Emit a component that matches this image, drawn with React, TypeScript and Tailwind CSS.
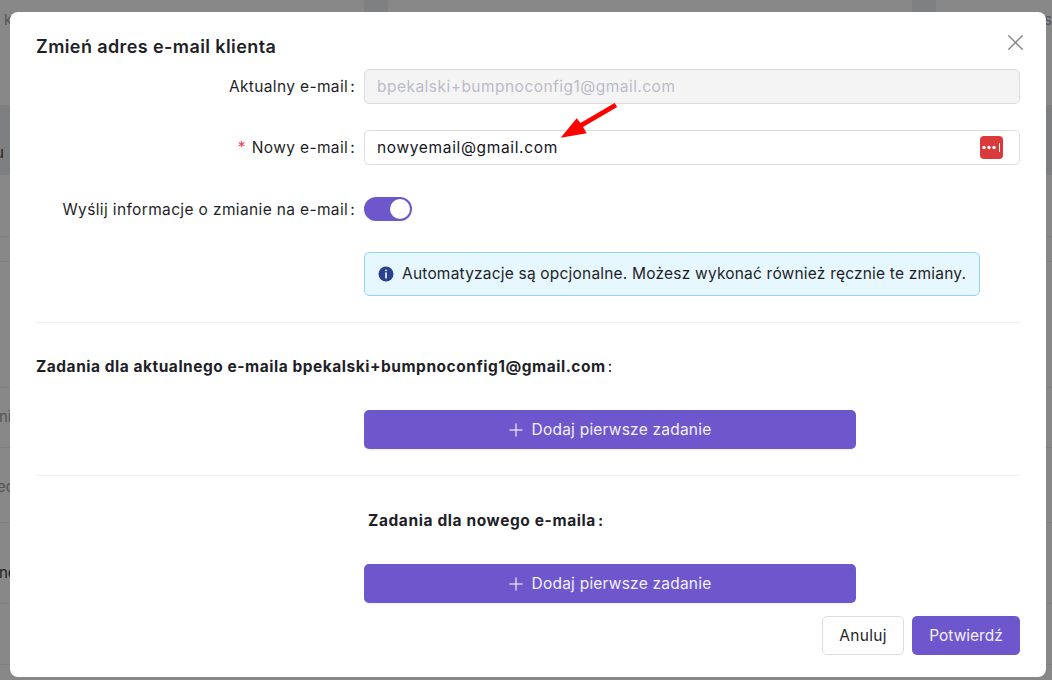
import { X } from "lucide-react";

const BG_ROWS = [
  { h: "h-[62px]", text: "", cls: "" },
  { h: "h-[25px]", text: "", cls: "" },
  { h: "h-[126px]", text: "", cls: "" },
  { h: "h-[60px]", text: "nic", cls: "-ml-[1px] text-[#555]" },
  { h: "h-[75px]", text: "ec", cls: "-ml-[3px] text-[#555] pt-[4px]" },
  { h: "h-[81px]", text: "nc", cls: "-ml-[1px] text-[#222] pt-[20px]" },
  { h: "h-[61px]", text: "", cls: "" },
];

function Backdrop() {
  return (
    <div className="flex flex-col text-[15px]">
      <div className="h-[105px] flex">
        <div className="w-[364px] pt-[9px] pl-[4px] text-[#555]">k</div>
        <div className="w-[24px] h-[12px] bg-[#7f8081]" />
        <div className="w-[524px]" />
        <div className="w-[24px] h-[12px] bg-[#7f8081]" />
        <div className="w-[116px] pt-[9px] pl-[108px] text-[#555]">s</div>
      </div>
      <div className="h-[70px] bg-[#7d7f80] flex items-center text-[#222] pt-[26px]">
        <span className="-ml-[5px]">u</span>
      </div>
      {BG_ROWS.map((row, i) => (
        <div key={i} className={`${row.h} border-b border-[#7f7f7f] flex items-center`}>
          <span className={row.cls}>{row.text}</span>
        </div>
      ))}
    </div>
  );
}

function Label({ children, required }: { children: string; required?: boolean }) {
  return (
    <div className="w-[319px] shrink-0 text-right text-[15.5px] tracking-[0.36px] text-[#1f1f28] mr-[9px] pt-[1px]">
      {required && <span className="text-[#f5405c] mr-[6px]">*</span>}
      {children}
      <span className="ml-[2px]">:</span>
    </div>
  );
}

function AddButton() {
  return (
    <button className="ml-[328px] w-[492px] h-[39px] rounded-[5px] bg-[#6e57cd] text-[#f3f0fc] text-[15.5px] tracking-[0.22px] flex items-center justify-center gap-[9px] pt-[1px] shadow-[0_2px_0_rgba(110,87,205,0.06)]">
      <svg width="14" height="14" viewBox="0 0 14 14" stroke="currentColor" strokeWidth="1.2">
        <line x1="0.5" y1="7" x2="13.5" y2="7" />
        <line x1="7" y1="0.5" x2="7" y2="13.5" />
      </svg>
      Dodaj pierwsze zadanie
    </button>
  );
}

export default function App() {
  return (
    <div className="relative w-[1052px] h-[680px] overflow-hidden bg-[#888888] font-['Inter','Liberation_Sans',sans-serif]">
      <Backdrop />

      {/* Modal */}
      <div className="absolute left-[10px] top-[12px] w-[1036px] h-[665px] bg-white rounded-[8px] pt-[23px] pl-[26px] pr-[26px]">
        <button className="absolute top-[17px] right-[17px] text-[#808080]">
          <X size={27} strokeWidth={1.1} />
        </button>

        <h2 className="h-[24px] leading-[24px] text-[18px] font-semibold text-[#1f1f28] tracking-[0.4px]">
          Zmień adres e-mail klienta
        </h2>

        <div className="mt-[10px] flex items-center h-[35px]">
          <Label>Aktualny e-mail</Label>
          <div className="flex-1 h-[35px] flex items-center px-[12px] pt-[1px] rounded-[5px] border border-[#dcdcdc] bg-[#f4f4f4] text-[15.5px] tracking-[0.47px] text-[#bcbcc8]">
            bpekalski+bumpnoconfig1@gmail.com
          </div>
        </div>

        <div className="mt-[26px] flex items-center h-[35px]">
          <Label required>Nowy e-mail</Label>
          <div className="flex-1 h-[35px] flex items-center justify-between pl-[12px] pr-[16px] rounded-[5px] border border-[#dcdcdc] bg-white text-[15.5px] tracking-[0.65px] text-[#14141c]">
            <span className="pt-[1px]">nowyemail@gmail.com</span>
            <svg width="23" height="23" viewBox="0 0 23 23">
              <rect width="23" height="23" rx="4" fill="#db3a3a" />
              <circle cx="4" cy="11.5" r="1.7" fill="#fff" />
              <circle cx="9" cy="11.5" r="1.7" fill="#fff" />
              <circle cx="14" cy="11.5" r="1.7" fill="#fff" />
              <rect x="19" y="7" width="1" height="9" fill="#fff" />
            </svg>
          </div>
        </div>

        <div className="mt-[32px] flex items-center h-[24px]">
          <Label>Wyślij informacje o zmianie na e-mail</Label>
          <div className="w-[48px] h-[24px] rounded-full bg-[#6e57cd] flex items-center justify-end pr-[2px]">
            <div className="w-[20px] h-[20px] rounded-full bg-white" />
          </div>
        </div>

        <div className="mt-[31px] ml-[328px] w-[616px] h-[44px] rounded-[5px] border border-[#91d5ff] bg-[#e6f7ff] flex items-center pl-[13px] gap-[8px] text-[15.5px] tracking-[0.2px] text-[#1f1f28]">
          <svg width="16" height="16" viewBox="0 0 16 16" className="shrink-0">
            <circle cx="8" cy="8" r="7.5" fill="#2a4190" />
            <rect x="7.1" y="3.4" width="1.8" height="1.8" rx="0.9" fill="#fff" />
            <rect x="7.2" y="6.4" width="1.6" height="6" fill="#fff" />
          </svg>
          Automatyzacje są opcjonalne. Możesz wykonać również ręcznie te zmiany.
        </div>

        <div className="mt-[26px] h-px bg-[#efefef]" />

        <div className="mt-[32px] h-[24px] leading-[24px] text-[15.5px] font-bold tracking-[0.52px] text-[#1f1f28]">
          Zadania dla aktualnego e-maila bpekalski+bumpnoconfig1@gmail.com
          <span className="ml-[2px] font-normal">:</span>
        </div>

        <div className="mt-[31px]">
          <AddButton />
        </div>

        <div className="mt-[26px] h-px bg-[#efefef]" />

        <div className="mt-[33px] ml-[332px] h-[24px] leading-[24px] text-[15.5px] font-bold tracking-[0.6px] text-[#1f1f28]">
          Zadania dla nowego e-maila
          <span className="ml-[2px]">:</span>
        </div>

        <div className="mt-[31px]">
          <AddButton />
        </div>

        <div className="mt-[13px] flex justify-end gap-[8px] text-[15.5px]">
          <button className="w-[82px] h-[39px] rounded-[5px] border border-[#dcdcdc] bg-white text-[#1f1f28] tracking-[0.3px] pt-[1px]">
            Anuluj
          </button>
          <button className="w-[108px] h-[39px] rounded-[5px] bg-[#6e57cd] text-[#f3f0fc] pt-[1px]">
            Potwierdź
          </button>
        </div>
      </div>

      {/* Red annotation arrow */}
      <svg className="absolute left-0 top-0 pointer-events-none" width="1052" height="680">
        <polygon
          points="614.6,103 617.2,107 583,127 586.7,133.3 560.7,137.7 576.7,118.3 580.5,123"
          fill="#ff0000"
        />
      </svg>
    </div>
  );
}
